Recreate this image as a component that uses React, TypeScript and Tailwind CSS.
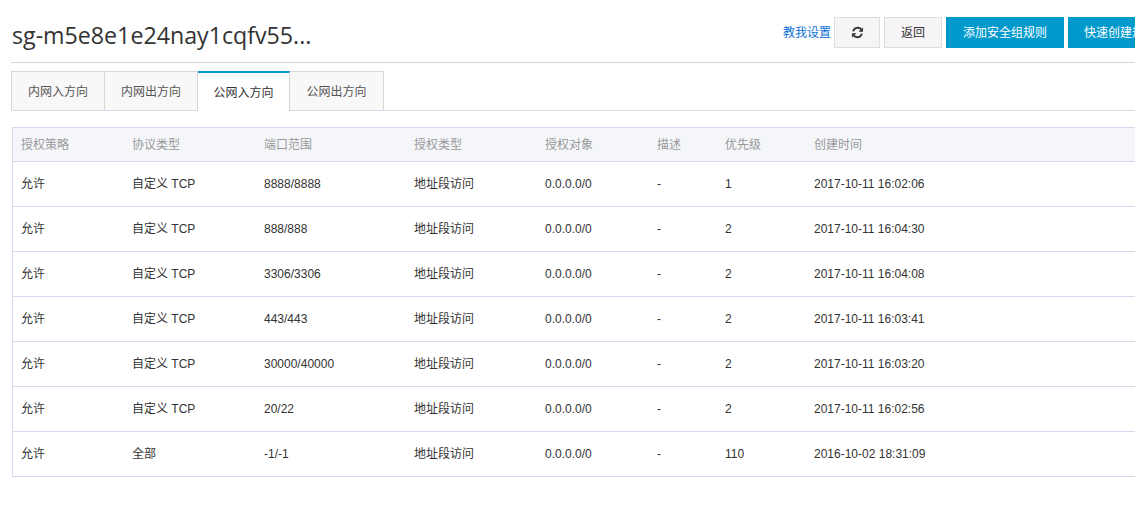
import React from "react";

const rows = [
  ["允许", "自定义 TCP", "8888/8888", "地址段访问", "0.0.0.0/0", "-", "1", "2017-10-11 16:02:06"],
  ["允许", "自定义 TCP", "888/888", "地址段访问", "0.0.0.0/0", "-", "2", "2017-10-11 16:04:30"],
  ["允许", "自定义 TCP", "3306/3306", "地址段访问", "0.0.0.0/0", "-", "2", "2017-10-11 16:04:08"],
  ["允许", "自定义 TCP", "443/443", "地址段访问", "0.0.0.0/0", "-", "2", "2017-10-11 16:03:41"],
  ["允许", "自定义 TCP", "30000/40000", "地址段访问", "0.0.0.0/0", "-", "2", "2017-10-11 16:03:20"],
  ["允许", "自定义 TCP", "20/22", "地址段访问", "0.0.0.0/0", "-", "2", "2017-10-11 16:02:56"],
  ["允许", "全部", "-1/-1", "地址段访问", "0.0.0.0/0", "-", "110", "2016-10-02 18:31:09"],
];
const heads = ["授权策略", "协议类型", "端口范围", "授权类型", "授权对象", "描述", "优先级", "创建时间"];
const cols = "grid grid-cols-[111px_132px_150px_131px_112px_68px_89px_1fr]";
const tabs = ["内网入方向", "内网出方向", "公网入方向", "公网出方向"];
const tabWidths = ["w-[94px]", "w-[93px]", "", "w-[94px]"];

export default function App() {
  return (
    <div className="h-[514px] w-[1135px] overflow-hidden bg-white text-[12px] text-[#333] font-['Liberation_Sans','Noto_Sans_CJK_SC',sans-serif]">
      <div className="mx-[11px] flex h-[63px] w-[1124px] items-center justify-between border-b border-[#d0d8cf] pb-[1px]">
        <h1 className="pl-[1px] pt-[8px] text-[23.2px] leading-[30px] font-normal text-[#333] font-['Open_Sans',sans-serif]">sg-m5e8e1e24nay1cqfv55...</h1>
        <div className="mt-[17px] flex h-[31px] w-[352px] flex-none items-center gap-1 self-start overflow-hidden">
          <a className="mr-[-2px] w-[49px] flex-none text-[#0a6fd6]">教我设置</a>
          <button className="flex h-[31px] w-[46px] flex-none items-center justify-center border border-[#ddd] bg-[#f6f4f7]">
            <svg width="13" height="13" viewBox="0 0 24 24" fill="none" stroke="#333" strokeWidth="3.4">
              <path d="M4 10a8.5 8.5 0 0 1 15-3.5L21 9" />
              <path d="M21.5 3v7h-7" fill="#333" strokeWidth="1" />
              <path d="M20 14a8.5 8.5 0 0 1-15 3.5L3 15" />
              <path d="M2.5 21v-7h7" fill="#333" strokeWidth="1" />
            </svg>
          </button>
          <button className="h-[31px] w-[58px] flex-none border border-[#ddd] bg-[#f6f4f7] text-[#333]">返回</button>
          <button className="h-[32px] w-[118px] flex-none bg-[#0099cc] text-white">添加安全组规则</button>
          <button className="h-[32px] w-[90px] flex-none overflow-hidden whitespace-nowrap bg-[#0099cc] pl-[16px] text-left text-white">快速创建规则</button>
        </div>
      </div>

      <div className="mx-[11px] mt-[8px] flex h-[40px] w-[1124px] border-b border-[#d3dbe8]">
        {tabs.map((t, i) => (
          <div
            key={t}
            className={
              i === 2
                ? "z-10 mb-[-1px] flex h-[40px] w-[92px] items-center justify-center border-r border-t-2 border-[#cfd4d0] border-t-[#0099cc] bg-white pt-[1px] text-[#333]"
                : "flex h-[39px] items-center justify-center border-t border-r border-[#d5d8d4] bg-[#f8f8f8] pt-[2px] text-[#555] first:border-l " + tabWidths[i]
            }
          >
            {t}
          </div>
        ))}
      </div>

      <div className="ml-[12px] mt-[16px] w-[1123px] border-b border-l border-t border-[#d3daec]">
        <div className={cols + " h-[34px] items-center border-b border-[#d3daec] bg-[#f4f6f9] text-[#999]"}>
          {heads.map((h) => (
            <div key={h} className="pl-[8px]">{h}</div>
          ))}
        </div>
        {rows.map((r, i) => (
          <div key={i} className={cols + " items-center text-[#333] " + (i < rows.length - 1 ? "h-[45px] border-b border-[#d3daec]" : "h-[44px]")}>
            {r.map((c, j) => (
              <div key={j} className="whitespace-nowrap pl-[8px]">{c}</div>
            ))}
          </div>
        ))}
      </div>
    </div>
  );
}
